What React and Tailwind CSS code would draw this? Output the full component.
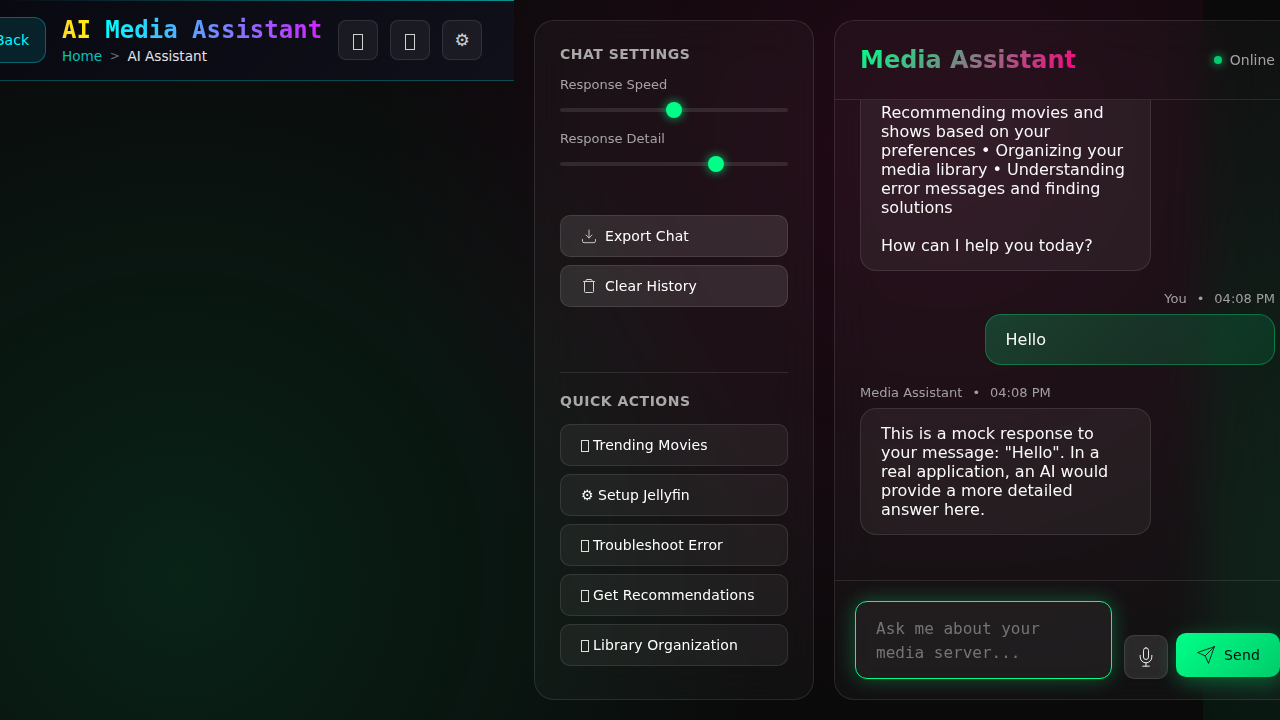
import React from "react";

const iconProps = {
  viewBox: "0 0 24 24",
  fill: "none",
  stroke: "currentColor",
  strokeLinecap: "round",
  strokeLinejoin: "round",
};

const DownloadIcon = () => (
  <svg {...iconProps} strokeWidth="1.5" className="size-4 shrink-0 opacity-70">
    <path d="M2.25 17.250v2.500a2.250 2.250 0 0 0 2.250 2.250h15a2.250 2.250 0 0 0 2.250-2.250v-2.500" />
    <path d="M7.500 10.500l4.500 4.500 4.500-4.500M12 15V3" />
  </svg>
);

const TrashIcon = () => (
  <svg {...iconProps} strokeWidth="1.5" className="size-4 shrink-0 opacity-80">
    <path d="M3.750 5.250h16.500M18.750 5.250v15a1.500 1.500 0 0 1-1.500 1.500H6.750a1.500 1.500 0 0 1-1.500-1.500v-15M7.500 5.250V3.750a1.500 1.500 0 0 1 1.500-1.500h6a1.500 1.500 0 0 1 1.500 1.500v1.500" />
  </svg>
);

const MicIcon = () => (
  <svg {...iconProps} strokeWidth="1.2" className="size-5 text-white/90">
    <path d="M12 1a3 3 0 0 0-3 3v8a3 3 0 0 0 6 0V4a3 3 0 0 0-3-3z" />
    <path d="M19 10v2a7 7 0 0 1-14 0v-2M12 19v4M8 23h8" />
  </svg>
);

const SendIcon = () => (
  <svg {...iconProps} strokeWidth="1" className="size-5 shrink-0">
    <path d="M22 2L11 13M22 2l-7 20-4-9-9-4 20-7z" />
  </svg>
);

function HeaderButton({ children }) {
  return (
    <div className="flex size-10 shrink-0 items-center justify-center rounded-lg border border-white/10 bg-white/5 text-[17px] leading-none text-white/80">
      {children}
    </div>
  );
}

const HeaderGlyph = () => <span className="mt-1 h-4 w-2.5 border border-white/80" />;

function Slider({ label, value }) {
  return (
    <div className="h-[54px]">
      <div className="text-[13px] leading-4 text-[#a8a4a6]">{label}</div>
      <div className="mt-[9px] flex h-4 items-center">
        <div className="flex h-1 w-full items-center rounded-sm bg-white/10">
          <div style={{ width: value }} />
          <div className="size-4 shrink-0 rounded-full bg-[#00ff88] shadow-[0_0_10px_rgba(0,255,136,0.75)]" />
        </div>
      </div>
    </div>
  );
}

function Meta({ name, right }) {
  return (
    <div className={"flex gap-[10px] text-[13px] leading-4 text-[#a3a0a2] " + (right ? "justify-end" : "")}>
      <span>{name}</span>
      <span>•</span>
      <span>04:08 PM</span>
    </div>
  );
}

const bubble = "rounded-2xl border px-5 py-[15px] text-base leading-[19px] text-[#fafafa]";
const panel = "rounded-[20px] border border-white/10 bg-white/[0.03] backdrop-blur-[20px]";
const actions = [
  { label: "Trending Movies" },
  { label: "Setup Jellyfin", gear: true },
  { label: "Troubleshoot Error" },
  { label: "Get Recommendations" },
  { label: "Library Organization" },
];

export default function App() {
  return (
    <div className="flex h-[720px] w-[1280px] items-start overflow-hidden bg-[#0a0a0a] bg-[image:radial-gradient(circle_at_20%_80%,rgba(0,255,136,0.1)_0%,transparent_50%),radial-gradient(circle_at_80%_20%,rgba(255,0,128,0.1)_0%,transparent_50%)] bg-size-[1280px_720px] bg-position-[-77px_0px] font-['DejaVu_Sans',sans-serif] text-white">
      <header className="flex h-[81px] w-[514px] shrink-0 flex-col border-b border-[#00ffff]/25 bg-[linear-gradient(135deg,#090912,#10101a)]">
        <div className="h-px w-full bg-[linear-gradient(90deg,rgba(0,255,255,0)_0%,rgba(0,255,255,0.55)_100%)]" />
        <div className="flex flex-1 items-center justify-end pr-8 pb-px">
          <div className="flex h-[46px] shrink-0 items-center rounded-xl border border-[#00ffff]/30 bg-[#00ffff]/10 px-4 text-sm font-medium text-[#00ffff]">
            <span className="whitespace-nowrap">← Back</span>
          </div>
          <div className="ml-4 w-[260px] shrink-0">
            <h1 className="whitespace-nowrap font-['DejaVu_Sans_Mono',monospace] text-2xl leading-[30px] font-bold">
              <span className="bg-[linear-gradient(90deg,#ffd726,#ffef0f)] bg-clip-text text-transparent">AI</span>{" "}
              <span className="bg-[linear-gradient(90deg,#00ffff,#5f9dff_42%,#d422ff)] bg-clip-text text-transparent">Media Assistant</span>
            </h1>
            <div className="mt-px flex items-center gap-[7.6px] text-[13.6px] leading-5">
              <span className="text-[#00c4bd]">Home</span>
              <span className="text-xs text-white/40">&gt;</span>
              <span className="text-white/90">AI Assistant</span>
            </div>
          </div>
          <div className="ml-4 flex shrink-0 gap-3">
            <HeaderButton><HeaderGlyph /></HeaderButton>
            <HeaderButton><HeaderGlyph /></HeaderButton>
            <HeaderButton>⚙</HeaderButton>
          </div>
        </div>
      </header>

      <main className="ml-5 flex h-[720px] shrink-0 gap-5 py-5">
        <aside className={"flex w-[280px] flex-col px-[25px] " + panel}>
          <h2 className="mt-[23px] text-sm leading-5 font-bold tracking-[0.5px] text-[#aaa8a9]">CHAT SETTINGS</h2>
          <div className="mt-[13px]">
            <Slider label="Response Speed" value="106px" />
            <Slider label="Response Detail" value="148px" />
          </div>
          <div className="mt-[30px] flex flex-col gap-2">
            <div className="flex h-[42px] items-center gap-2 rounded-[10px] border border-white/10 bg-white/10 px-5 text-sm tracking-[0.08px]">
              <DownloadIcon />
              Export Chat
            </div>
            <div className="flex h-[42px] items-center gap-2 rounded-[10px] border border-white/10 bg-white/10 px-5 text-sm tracking-[0.08px]">
              <TrashIcon />
              Clear History
            </div>
          </div>
          <div className="mt-[65px] h-px bg-white/10" />
          <h2 className="mt-[18px] text-sm leading-5 font-bold tracking-[0.5px] text-[#aaa8a9]">QUICK ACTIONS</h2>
          <div className="mt-[13px] flex flex-col gap-2">
            {actions.map(({ label, gear }) => (
              <div
                key={label}
                className={
                  "flex h-[42px] items-center rounded-[10px] border border-white/10 bg-white/5 px-5 text-sm whitespace-pre " +
                  (gear ? "tracking-normal" : "tracking-[0.1px]")
                }
              >
                {gear ? "⚙ " : <span className="mt-px mr-1 h-3 w-2 border border-white/85" />}
                {label}
              </div>
            ))}
          </div>
        </aside>

        <section className={"flex w-[467px] shrink-0 flex-col overflow-hidden " + panel}>
          <div className="flex h-[79px] shrink-0 items-center justify-between border-b border-white/10 px-[25px]">
            <h2 className="bg-[linear-gradient(135deg,#00ff88,#ff0080)] bg-clip-text text-2xl leading-7 font-bold text-transparent">Media Assistant</h2>
            <div className="flex items-center gap-2 text-sm text-[#a3a3a3]">
              <span className="size-2 rounded-full bg-[#00cc6e] shadow-[0_0_10px_rgba(0,255,136,0.8)]" />
              Online
            </div>
          </div>

          <div className="flex h-[480px] shrink-0 flex-col justify-end overflow-hidden px-[25px] pb-[45px]">
            <div className={bubble + " w-[291px] shrink-0 border-white/10 bg-white/5"}>
              Recommending movies and shows based on your preferences • Organizing your media library • Understanding error messages and finding solutions
              <br />
              <br />
              How can I help you today?
            </div>
            <div className="mt-5 flex flex-col gap-[7px]">
              <Meta name="You" right />
              <div className={bubble + " w-[290.5px] self-end border-[#00ff88]/30 bg-[linear-gradient(135deg,rgba(0,255,136,0.2),rgba(0,255,136,0.1))]"}>Hello</div>
            </div>
            <div className="mt-5 flex flex-col gap-[7px]">
              <Meta name="Media Assistant" />
              <div className={bubble + " w-[291px] border-white/10 bg-white/5"}>
                This is a mock response to your message: "Hello". In a real application, an AI would provide a more detailed answer here.
              </div>
            </div>
          </div>

          <div className="flex flex-1 items-end border-t border-white/10 px-5 pb-5">
            <div className="h-[78px] w-[257px] shrink-0 rounded-xl border border-[#00ff88] bg-white/5 px-5 py-[15px] font-['DejaVu_Sans_Mono',monospace] text-base leading-6 text-[#757575] shadow-[0_0_20px_rgba(0,255,136,0.3)]">
              Ask me about your media server...
            </div>
            <div className="ml-3 flex size-11 shrink-0 items-center justify-center rounded-[10px] border border-white/10 bg-white/10">
              <MicIcon />
            </div>
            <div className="mb-0.5 ml-2 flex h-11 w-[104px] shrink-0 items-center gap-2 rounded-[10px] bg-[linear-gradient(135deg,#00ff88,#00cc6a)] pl-5 text-sm font-medium tracking-[0.2px] text-[#0a0a0a] shadow-[0_5px_20px_rgba(0,255,136,0.3)]">
              <SendIcon />
              Send
            </div>
          </div>
        </section>
      </main>
    </div>
  );
}
